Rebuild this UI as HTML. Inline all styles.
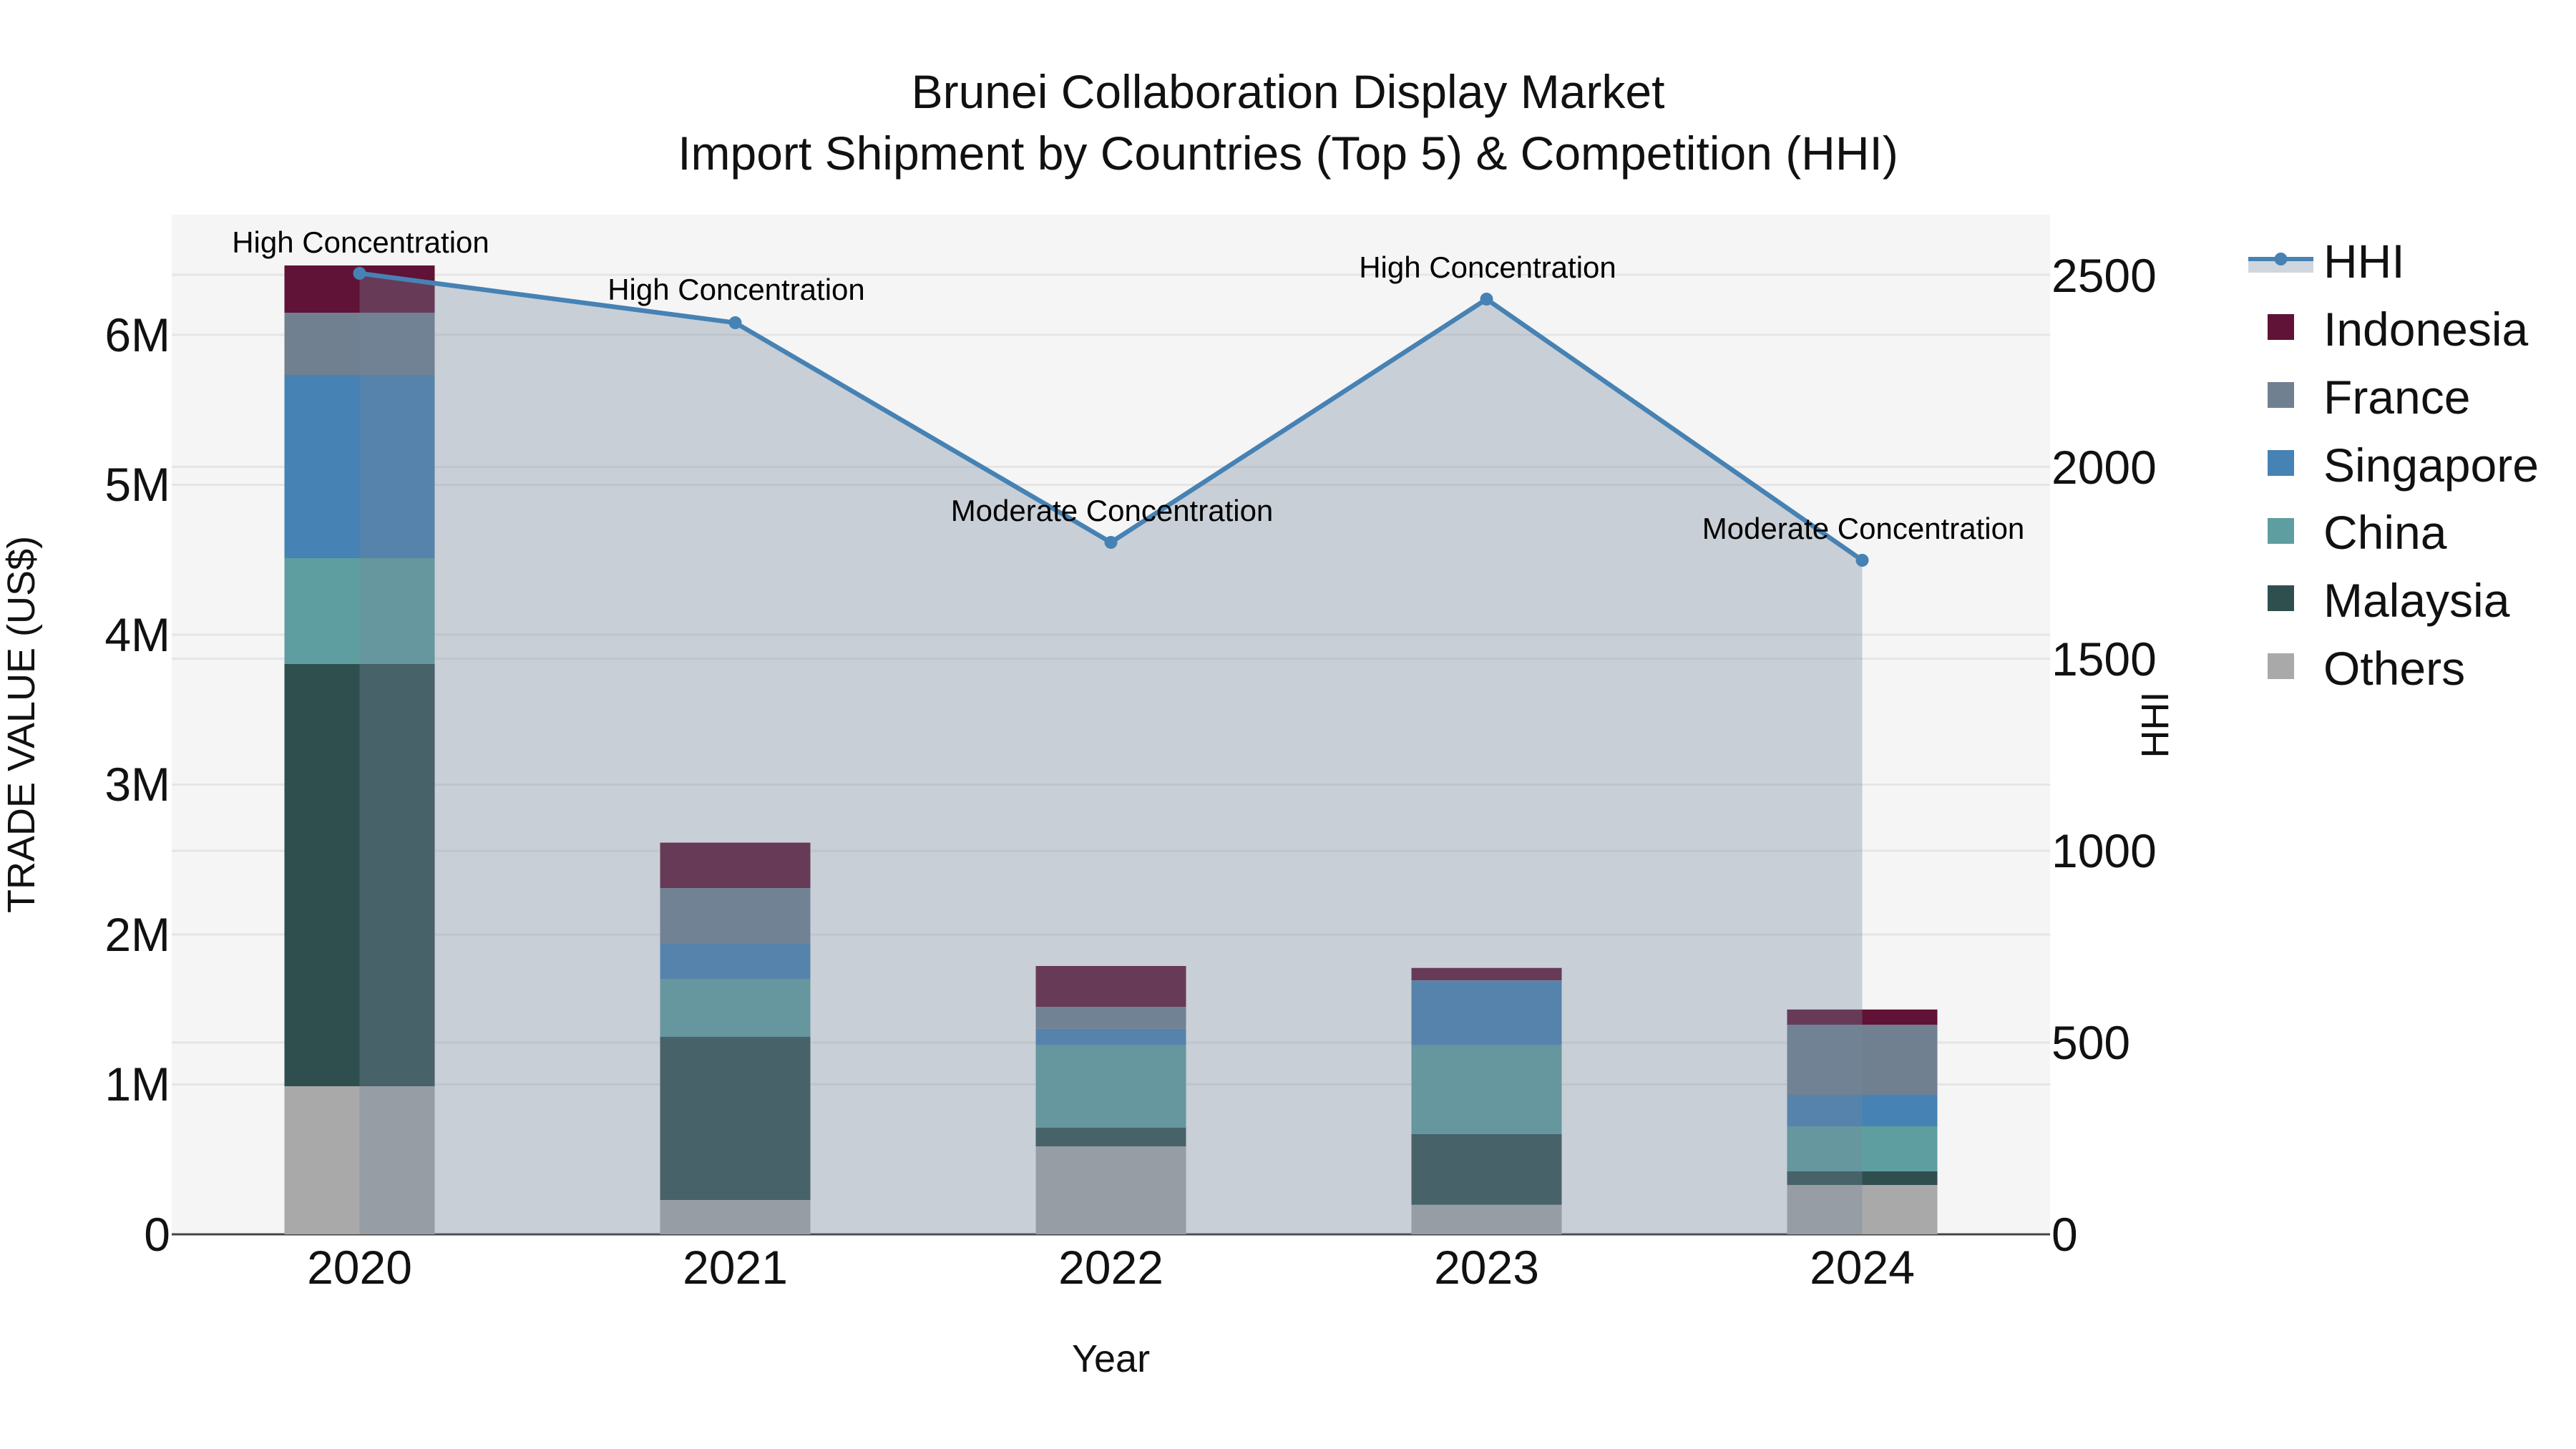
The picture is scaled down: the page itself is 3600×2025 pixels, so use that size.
<!DOCTYPE html>
<html><head><meta charset="utf-8"><style>
html,body{margin:0;padding:0;background:#fff;width:3600px;height:2025px;overflow:hidden}
svg{display:block}
text{font-family:"Liberation Sans",Arial,sans-serif;fill:#111}
.t{font-size:66px}
.a{font-size:42px;fill:#000;text-anchor:middle}
</style></head><body>
<svg width="3600" height="2025" viewBox="0 0 3600 2025" xmlns="http://www.w3.org/2000/svg">
<rect width="3600" height="2025" fill="#fff"/>
<text class="t" x="1800" y="151" text-anchor="middle">Brunei Collaboration Display Market</text>
<text class="t" x="1800" y="237" text-anchor="middle">Import Shipment by Countries (Top 5) &amp; Competition (HHI)</text>
<rect x="240" y="300" width="2625" height="1425" fill="#f5f5f5"/>
<g stroke="#e5e5e5" stroke-width="3">
<path d="M240 1515.5H2865M240 1306H2865M240 1096.5H2865M240 887H2865M240 677.5H2865M240 468H2865"/>
<path d="M240 1457H2865M240 1189H2865M240 920.6H2865M240 652.4H2865M240 384H2865"/>
</g>
<path d="M240 1725H2865" stroke="#444" stroke-width="3"/>
<g>
<g fill="#a9a9a9"><rect x="397.5" y="1518" width="210" height="207"/><rect x="922.5" y="1677" width="210" height="48"/><rect x="1447.5" y="1602" width="210" height="123"/><rect x="1972.5" y="1683.7" width="210" height="41.3"/><rect x="2497.5" y="1656" width="210" height="69"/></g>
<g fill="#2f4f4f"><rect x="397.5" y="928" width="210" height="590"/><rect x="922.5" y="1449" width="210" height="228"/><rect x="1447.5" y="1576" width="210" height="26"/><rect x="1972.5" y="1585" width="210" height="98.7"/><rect x="2497.5" y="1637" width="210" height="19"/></g>
<g fill="#5f9ea0"><rect x="397.5" y="780" width="210" height="148"/><rect x="922.5" y="1368" width="210" height="81"/><rect x="1447.5" y="1460.7" width="210" height="115.3"/><rect x="1972.5" y="1460.7" width="210" height="124.3"/><rect x="2497.5" y="1574" width="210" height="63"/></g>
<g fill="#4682b4"><rect x="397.5" y="524" width="210" height="256"/><rect x="922.5" y="1319" width="210" height="49"/><rect x="1447.5" y="1437.7" width="210" height="23"/><rect x="1972.5" y="1370.7" width="210" height="90"/><rect x="2497.5" y="1530" width="210" height="44"/></g>
<g fill="#708090"><rect x="397.5" y="437" width="210" height="87"/><rect x="922.5" y="1241" width="210" height="78"/><rect x="1447.5" y="1407" width="210" height="30.7"/><rect x="1972.5" y="1370" width="210" height="0.7"/><rect x="2497.5" y="1432" width="210" height="98"/></g>
<g fill="#601336"><rect x="397.5" y="371" width="210" height="66"/><rect x="922.5" y="1177.6" width="210" height="63.4"/><rect x="1447.5" y="1350" width="210" height="57"/><rect x="1972.5" y="1352.7" width="210" height="17.3"/><rect x="2497.5" y="1410.8" width="210" height="21.2"/></g>
</g>
<path d="M502.5 382L1027.5 451L1552.5 758L2077.5 418L2602.5 783V1725H502.5Z" fill="#75869b" fill-opacity="0.34"/>
<path d="M502.5 382L1027.5 451L1552.5 758L2077.5 418L2602.5 783" fill="none" stroke="#4682b4" stroke-width="6.5" stroke-linejoin="round"/>
<g fill="#4682b4"><circle cx="502.5" cy="382" r="9"/><circle cx="1027.5" cy="451" r="9"/><circle cx="1552.5" cy="758" r="9"/><circle cx="2077.5" cy="418" r="9"/><circle cx="2602.5" cy="783" r="9"/></g>
<text class="a" x="504" y="353">High Concentration</text>
<text class="a" x="1029" y="419">High Concentration</text>
<text class="a" x="1554" y="728">Moderate Concentration</text>
<text class="a" x="2079" y="388">High Concentration</text>
<text class="a" x="2604" y="753">Moderate Concentration</text>
<g text-anchor="end">
<text class="t" x="238" y="1748">0</text>
<text class="t" x="238" y="1538">1M</text>
<text class="t" x="238" y="1329">2M</text>
<text class="t" x="238" y="1119">3M</text>
<text class="t" x="238" y="910">4M</text>
<text class="t" x="238" y="700">5M</text>
<text class="t" x="238" y="491">6M</text>
</g>
<g>
<text class="t" x="2867" y="1748">0</text>
<text class="t" x="2867" y="1480">500</text>
<text class="t" x="2867" y="1212">1000</text>
<text class="t" x="2867" y="944">1500</text>
<text class="t" x="2867" y="676">2000</text>
<text class="t" x="2867" y="408">2500</text>
</g>
<g text-anchor="middle">
<text class="t" x="502.5" y="1794">2020</text>
<text class="t" x="1027.5" y="1794">2021</text>
<text class="t" x="1552.5" y="1794">2022</text>
<text class="t" x="2077.5" y="1794">2023</text>
<text class="t" x="2602.5" y="1794">2024</text>
</g>
<text x="1552.5" y="1917" font-size="54" text-anchor="middle">Year</text>
<text transform="translate(48 1012.5) rotate(-90)" font-size="54" text-anchor="middle">TRADE VALUE (US$)</text>
<text transform="translate(3030 1013) rotate(-90)" font-size="54" text-anchor="middle">HHI</text>
<rect x="3142" y="362" width="91" height="19" fill="#75869b" fill-opacity="0.34"/>
<path d="M3142 362H3233" stroke="#4682b4" stroke-width="6"/>
<circle cx="3187.5" cy="362" r="9" fill="#4682b4"/>
<rect x="3169" y="439" width="37" height="36" fill="#601336"/>
<rect x="3169" y="534" width="37" height="36" fill="#708090"/>
<rect x="3169" y="629" width="37" height="36" fill="#4682b4"/>
<rect x="3169" y="724" width="37" height="36" fill="#5f9ea0"/>
<rect x="3169" y="818" width="37" height="36" fill="#2f4f4f"/>
<rect x="3169" y="913" width="37" height="36" fill="#a9a9a9"/>
<g>
<text class="t" x="3247" y="388">HHI</text>
<text class="t" x="3247" y="483">Indonesia</text>
<text class="t" x="3247" y="578">France</text>
<text class="t" x="3247" y="673">Singapore</text>
<text class="t" x="3247" y="767">China</text>
<text class="t" x="3247" y="862">Malaysia</text>
<text class="t" x="3247" y="957">Others</text>
</g>
</svg>
</body></html>
